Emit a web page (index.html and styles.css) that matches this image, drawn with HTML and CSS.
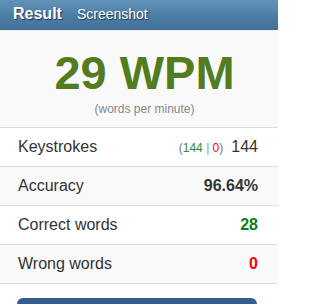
FILE: index.html
```html
<!DOCTYPE html>
<html>
<head>
<meta charset="utf-8">
<link rel="stylesheet" href="styles.css">
</head>
<body>
<div class="panel">
  <div class="header">
    <span class="tab-active">Result</span>
    <span class="tab">Screenshot</span>
  </div>
  <div class="summary">
    <div class="wpm">29 WPM</div>
    <div class="wpm-sub">(words per minute)</div>
  </div>
  <div class="row row-white">
    <span class="label">Keystrokes</span>
    <span class="value"><span class="detail"><span class="paren">(</span><span class="ok">144</span> <span class="sep">|</span> <span class="bad">0</span><span class="paren">)</span></span>144</span>
  </div>
  <div class="row row-grey">
    <span class="label">Accuracy</span>
    <span class="value bold">96.64%</span>
  </div>
  <div class="row row-white">
    <span class="label">Correct words</span>
    <span class="value bold green">28</span>
  </div>
  <div class="row row-grey">
    <span class="label">Wrong words</span>
    <span class="value bold red">0</span>
  </div>
  <div class="actions">
    <div class="button"></div>
  </div>
</div>
</body>
</html>
```
FILE: styles.css
```css
html, body {
  margin: 0;
  padding: 0;
  background: #ffffff;
}
body {
  font-family: "Liberation Sans", Arial, sans-serif;
  color: #333333;
}
.panel {
  width: 278px;
}
.header {
  height: 31px;
  box-sizing: border-box;
  display: flex;
  align-items: baseline;
  padding: 5px 0 0 13px;
  background: linear-gradient(to bottom, #6193b9 0%, #4a7ba2 60%, #41719a 100%);
  border-bottom: 1px solid #f2f2f2;
  color: #ffffff;
  text-shadow: 1px 1px 1px rgba(0, 0, 0, 0.55);
}
.tab-active {
  font-weight: bold;
  font-size: 16px;
  line-height: 18px;
  margin-right: 15px;
}
.tab {
  font-size: 14px;
  line-height: 18px;
}
.summary {
  background: #f9f9f9;
  text-align: center;
  padding: 18px 0 12px 11px;
  height: 97px;
  box-sizing: border-box;
  border-bottom: 1px solid #dddddd;
}
.wpm {
  font-size: 47px;
  line-height: 47px;
  font-weight: bold;
  color: #527c1f;
}
.wpm-sub {
  margin-top: 6px;
  font-size: 12px;
  line-height: 14px;
  color: #888888;
}
.row {
  height: 39px;
  box-sizing: border-box;
  display: flex;
  align-items: center;
  justify-content: space-between;
  padding: 0 20px 0 18px;
  border-bottom: 1px solid #dddddd;
  font-size: 16px;
}
.row-white { background: #ffffff; }
.row-grey { background: #f9f9f9; }
.value { color: #333333; }
.bold { font-weight: bold; }
.green { color: #0f7f0f; }
.red { color: #ff0000; }
.detail {
  font-size: 12px;
  margin-right: 8px;
}
.paren { color: #777777; }
.ok { color: #2f8a2f; }
.sep { color: #6aa0d0; }
.bad { color: #ff0000; }
.actions {
  padding: 14px 21px 0 17px;
}
.button {
  height: 6px;
  border-radius: 6px 6px 0 0;
  background: #335d8e;
}
```
